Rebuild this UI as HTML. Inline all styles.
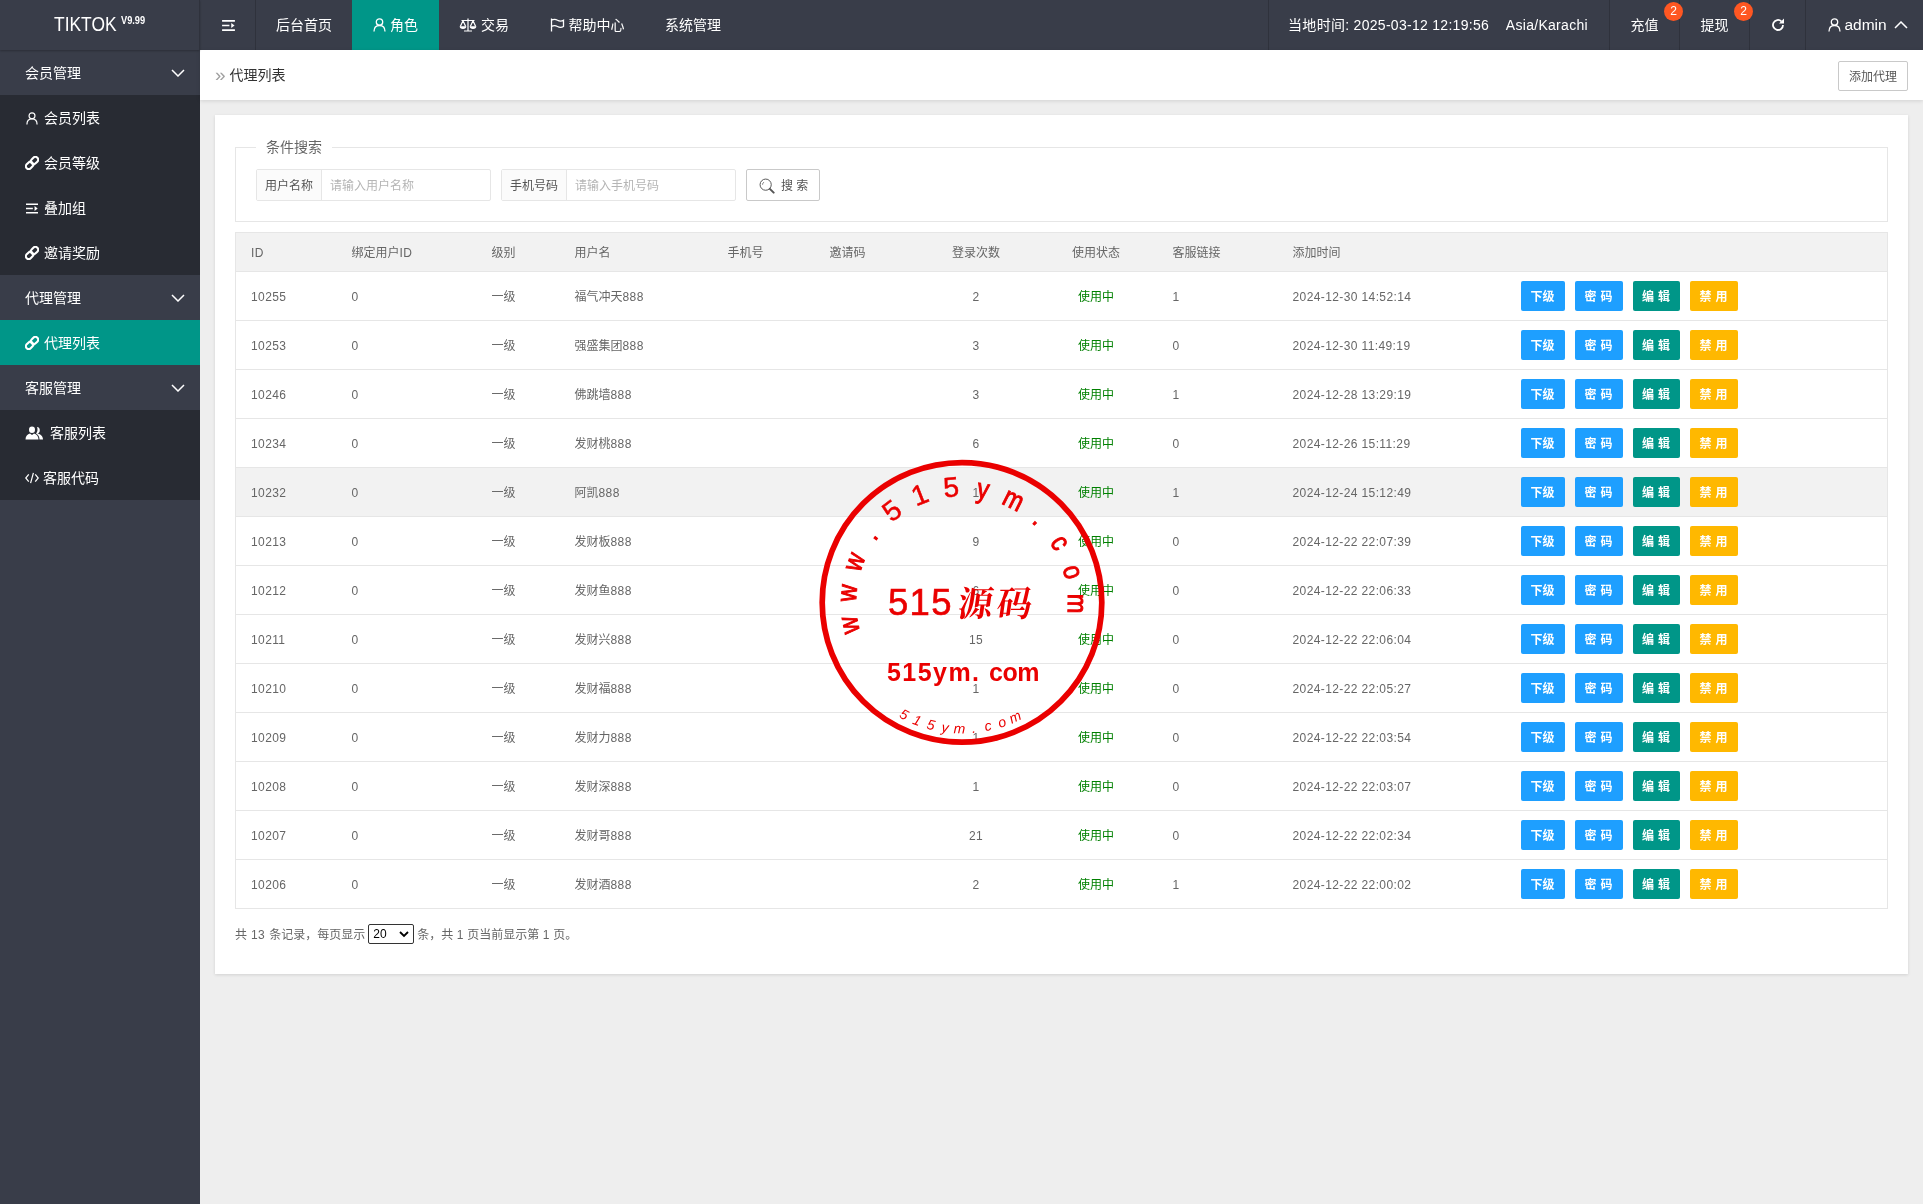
<!DOCTYPE html>
<html lang="zh-CN">
<head>
<meta charset="utf-8">
<title>代理列表</title>
<style>
*{box-sizing:border-box;margin:0;padding:0}
html,body{width:1923px;height:1204px;overflow:hidden}
body{font-family:"Liberation Sans","Noto Sans CJK SC",sans-serif;font-size:14px;color:#333;background:#eeeeee;position:relative;will-change:transform}
a{text-decoration:none;color:inherit}
ul{list-style:none}
/* header */
.header{position:absolute;left:0;top:0;width:1923px;height:50px;background:#393d49;color:#fff}
.logo{position:absolute;left:0;top:0;width:200px;height:50px;line-height:50px;font-size:20px;color:#fff;border-right:1px solid #2f323c;box-shadow:0 1px 2px rgba(0,0,0,.25);z-index:5}
.logo b{position:absolute;left:54px;top:-1px;font-weight:normal;transform:scaleX(.87);transform-origin:0 50%}
.logo i{position:absolute;left:121px;top:-5px;font-style:normal;font-weight:bold;font-size:10.5px;transform:scaleX(.88);transform-origin:0 50%}
.nav{position:absolute;top:0;height:50px}
.nav li{float:left;height:50px;line-height:50px;font-size:14px;color:#fff;text-align:center;position:relative}
.nav li.bl{border-left:1px solid #2f323c}
.nav li.br{border-right:1px solid #2f323c}
.nav li.on{background:#009688}
.nav svg{vertical-align:middle;position:relative;top:-1px}
.badge{position:absolute;z-index:3;right:-4px;top:2px;width:19px;height:19px;border-radius:10px;background:#ff5722;color:#fff;font-size:12px;line-height:19px;text-align:center}
/* side */
.side{position:absolute;left:0;top:50px;width:200px;height:1154px;background:#393d49}
.side li{height:45px;line-height:47px;color:#fff;font-size:14px;position:relative}
.side li.g{padding-left:25px;background:#393d49}
.side li.s{padding-left:25px;background:#282b33}
.side li.on{background:#009688}
.side li.g svg.arr{position:absolute;right:15px;top:19px}
.side li svg.ic{vertical-align:middle;position:relative;top:-1px;margin-right:5px}
/* body */
.crumb{position:absolute;left:200px;top:50px;width:1723px;height:50px;background:#fff;box-shadow:0 1px 4px rgba(0,0,0,.12);line-height:50px;font-size:14px;color:#333}
.crumb .t{position:absolute;left:15px;top:0}
.crumb .t i{font-style:normal;color:#a0a0a0;margin-right:4px;font-size:19px;position:relative;top:1px;line-height:20px}
.addbtn{position:absolute;left:1638px;top:11px;width:70px;height:30px;border:1px solid #c9c9c9;border-radius:2px;line-height:30px;text-align:center;font-size:12px;color:#555;background:#fff}
.card{position:absolute;left:215px;top:115px;width:1693px;height:859px;background:#fff;box-shadow:0 1px 3px rgba(0,0,0,.12)}
.fs{position:absolute;left:20px;top:32px;width:1653px;height:75px;border:1px solid #e6e6e6}
.fs .lg{position:absolute;left:20px;top:-12px;background:#fff;padding:0 10px;font-size:14px;color:#666;line-height:22px}
.grp{position:absolute;top:21px;height:32px;border:1px solid #e6e6e6;border-radius:2px;font-size:12px}
.grp .l{position:absolute;left:0;top:0;width:65px;height:30px;line-height:32px;text-align:center;background:#fbfbfb;border-right:1px solid #e6e6e6;color:#555}
.grp .p{position:absolute;left:73px;top:0;line-height:32px;color:#b5b5b5}
.sbtn{position:absolute;left:510px;top:21px;width:74px;height:32px;border:1px solid #c9c9c9;border-radius:2px;line-height:32px;font-size:12px;color:#555;background:#fff}
.sbtn svg{position:absolute;left:12px;top:8px}
.sbtn span{position:absolute;left:34px;top:0}
table{position:absolute;left:20px;top:117px;width:1653px;border-collapse:collapse;table-layout:fixed;font-size:12px;color:#666}
table th,table td{border-top:1px solid #e6e6e6;border-bottom:1px solid #e6e6e6;text-align:left;padding:2px 15px 0;font-weight:normal;white-space:nowrap;line-height:20px}
table{border:1px solid #e6e6e6}
thead tr{height:39px;background:#f2f2f2}
tbody tr{height:49px}
tr.hov{background:#f2f2f2}
.n{letter-spacing:.39px}
th.c,td.c{text-align:center}
.ok{color:#008000}
.btn{display:inline-block;position:relative;top:-1px;height:30px;line-height:32px;word-spacing:.7px;padding:0;text-align:center;width:48px;border-radius:2px;color:#fff;font-size:12px;font-weight:bold;vertical-align:middle;margin-right:10px}
.w44{width:44px}.w47{width:47px}.b1{background:#1e9fff}.b2{background:#009688}.b3{background:#ffb800}
.pg{position:absolute;left:20px;top:810px;font-size:12px;color:#666;line-height:20px;white-space:nowrap}
.sel{display:inline-block;vertical-align:middle;width:46px;height:20px;border:1px solid #333;border-radius:2px;margin:0 3px;position:relative;top:-2px;color:#000;font-size:12px;line-height:18px;padding-left:4px;background:#fff}
.sel svg{position:absolute;right:4px;top:6px}
.stamp{position:absolute;left:762px;top:402px;width:400px;height:400px}
</style>
</head>
<body>
<div class="header">
  <div class="logo"><b>TIKTOK</b><i>V9.99</i></div>
  <ul class="nav" style="left:200px">
    <li class="br" style="width:56px"><svg style="left:1px" width="13" height="11" viewBox="0 0 14 12"><path d="M0 1h14M0 6h8M0 11h14" stroke="#fff" stroke-width="1.8" fill="none"/><path d="M10 3.2l3.6 2.8L10 8.8z" fill="#fff"/></svg></li>
    <li style="width:96px">后台首页</li>
    <li class="on" style="width:87px"><svg width="13" height="14" viewBox="0 0 13 14"><circle cx="6.5" cy="4" r="3.2" stroke="#fff" stroke-width="1.3" fill="none"/><path d="M1 13.5c0-4 2.4-6 5.5-6s5.5 2 5.5 6" stroke="#fff" stroke-width="1.3" fill="none"/></svg> 角色</li>
    <li style="width:90px"><svg width="18" height="14" viewBox="0 0 18 14"><path d="M9 0.5v12M5 13h8M2.500 2.500h13M4 2.800L1.300 8.500M4 2.800L6.700 8.500M14 2.800L11.300 8.500M14 2.800L16.700 8.500" stroke="#fff" stroke-width="1.200" fill="none"/><path d="M0.700 8.300h6.600a3.300 2.600 0 0 1-6.600 0zM10.700 8.300h6.600a3.300 2.600 0 0 1-6.600 0z" fill="#fff"/></svg> 交易</li>
    <li style="width:116px"><svg width="15" height="14" viewBox="0 0 15 14"><path d="M1.500 0.500v13M1.500 2.200c2-1.200 4-1.200 6 0s4 1.200 6 0v6.300c-2 1.200-4 1.200-6 0s-4-1.200-6 0" stroke="#fff" stroke-width="1.300" fill="none"/></svg> 帮助中心</li>
    <li style="width:96px">系统管理</li>
  </ul>
  <ul class="nav" style="left:1268px">
    <li class="bl" style="width:341px;letter-spacing:.29px;padding-right:2px">当地时间: 2025-03-12 12:19:56 &nbsp;&nbsp;&nbsp;Asia/Karachi</li>
    <li class="bl" style="width:70px">充值<span class="badge">2</span></li>
    <li class="bl" style="width:70px">提现<span class="badge">2</span></li>
    <li class="bl" style="width:56px"><svg width="14" height="14" viewBox="0 0 14 14"><path d="M12 7a5 5 0 1 1-1.6-3.7" stroke="#fff" stroke-width="1.8" fill="none"/><path d="M13 0.5v5h-5z" fill="#fff"/></svg></li>
    <li class="bl" style="width:118px;padding-left:6px"><svg width="13" height="14" viewBox="0 0 13 14"><circle cx="6.5" cy="4" r="3.2" stroke="#fff" stroke-width="1.3" fill="none"/><path d="M1 13.5c0-4 2.4-6 5.5-6s5.5 2 5.5 6" stroke="#fff" stroke-width="1.3" fill="none"/></svg> <span style="font-size:15.5px">admin</span> <svg style="margin-left:3px" width="14" height="8" viewBox="0 0 14 8"><path d="M1 7l6-6 6 6" stroke="#fff" stroke-width="1.5" fill="none"/></svg></li>
  </ul>
</div>

<div class="side">
  <ul>
    <li class="g">会员管理<svg class="arr" width="14" height="8" viewBox="0 0 14 8"><path d="M1 1l6 6 6-6" stroke="#fff" stroke-width="1.5" fill="none"/></svg></li>
    <li class="s"><svg class="ic" style="margin-left:1px;margin-right:6px" width="12" height="13" viewBox="0 0 13 14"><circle cx="6.5" cy="4" r="3.2" stroke="#fff" stroke-width="1.3" fill="none"/><path d="M1 13.5c0-4 2.4-6 5.5-6s5.5 2 5.5 6" stroke="#fff" stroke-width="1.3" fill="none"/></svg>会员列表</li>
    <li class="s"><svg class="ic" width="14" height="14" viewBox="0 0 14 14"><g transform="rotate(-45 7 7)" stroke="#fff" stroke-width="2.100" fill="none"><rect x="-0.5" y="4.2" width="8" height="5.6" rx="2.8"/><rect x="6.5" y="4.2" width="8" height="5.6" rx="2.8"/></g></svg>会员等级</li>
    <li class="s"><svg class="ic" style="margin-left:1px;margin-right:6px" width="12" height="11" viewBox="0 0 14 12"><path d="M0 1h14M0 6h8M0 11h14" stroke="#fff" stroke-width="1.8" fill="none"/><path d="M10 3.2l3.6 2.8L10 8.8z" fill="#fff"/></svg>叠加组</li>
    <li class="s"><svg class="ic" width="14" height="14" viewBox="0 0 14 14"><g transform="rotate(-45 7 7)" stroke="#fff" stroke-width="2.100" fill="none"><rect x="-0.5" y="4.2" width="8" height="5.6" rx="2.8"/><rect x="6.5" y="4.2" width="8" height="5.6" rx="2.8"/></g></svg>邀请奖励</li>
    <li class="g">代理管理<svg class="arr" width="14" height="8" viewBox="0 0 14 8"><path d="M1 1l6 6 6-6" stroke="#fff" stroke-width="1.5" fill="none"/></svg></li>
    <li class="s on"><svg class="ic" width="14" height="14" viewBox="0 0 14 14"><g transform="rotate(-45 7 7)" stroke="#fff" stroke-width="2.100" fill="none"><rect x="-0.5" y="4.2" width="8" height="5.6" rx="2.8"/><rect x="6.5" y="4.2" width="8" height="5.6" rx="2.8"/></g></svg>代理列表</li>
    <li class="g">客服管理<svg class="arr" width="14" height="8" viewBox="0 0 14 8"><path d="M1 1l6 6 6-6" stroke="#fff" stroke-width="1.5" fill="none"/></svg></li>
    <li class="s"><svg class="ic" width="19" height="14" viewBox="0 0 19 14" style="margin-right:6px"><path d="M7 0.5a3 3.3 0 0 1 0 6.6a3 3.3 0 0 1 0-6.6zM0.5 13.5c0-3.5 2-5.5 4.5-6l2 1.5 2-1.5c2.5 0.5 4.500 2.500 4.500 6z" fill="#fff"/><path d="M12 1a3 3.300 0 0 1 0.500 6.500c3 0.500 5.500 2.500 5.500 6h-3.500c0-3-1.500-5-3.500-6c1.500-1 2-4.500 1-6.500z" fill="#fff"/></svg>客服列表</li>
    <li class="s"><svg class="ic" style="margin-right:4px" width="14" height="12" viewBox="0 0 15 12"><path d="M4 2L0.800 6L4 10M11 2l3.200 4L11 10M9 0.500L6 11.500" stroke="#fff" stroke-width="1.300" fill="none"/></svg>客服代码</li>
  </ul>
</div>

<div class="crumb"><span class="t"><i>»</i>代理列表</span><a class="addbtn">添加代理</a></div>

<div class="card">
  <div class="fs"><span class="lg">条件搜索</span>
    <div class="grp" style="left:20px;width:235px"><span class="l">用户名称</span><span class="p">请输入用户名称</span></div>
    <div class="grp" style="left:265px;width:235px"><span class="l">手机号码</span><span class="p">请输入手机号码</span></div>
    <a class="sbtn"><svg width="16" height="16" viewBox="0 0 18 18"><circle cx="7.500" cy="7.500" r="6.300" stroke="#555" stroke-width="1.100" fill="none"/><path d="M12.200 12.200l4.300 4.300" stroke="#555" stroke-width="2.200" stroke-linecap="round"/><path d="M4 7.500a3.500 3.500 0 0 1 1.500-2.800" stroke="#555" stroke-width="0.900" fill="none"/></svg><span>搜 索</span></a>
  </div>
  <table>
    <colgroup><col style="width:101px"><col style="width:140px"><col style="width:83px"><col style="width:153px"><col style="width:102px"><col style="width:103px"><col style="width:117px"><col style="width:123px"><col style="width:120px"><col style="width:228px"><col></colgroup>
    <thead><tr><th><span class="n">ID</span></th><th>绑定用户<span class="n">ID</span></th><th>级别</th><th>用户名</th><th>手机号</th><th>邀请码</th><th class="c">登录次数</th><th class="c">使用状态</th><th>客服链接</th><th>添加时间</th><th></th></tr></thead>
    <tbody>
<tr><td><span class="n">10255</span></td><td><span class="n">0</span></td><td>一级</td><td>福气冲天<span class="n">888</span></td><td></td><td></td><td class="c"><span class="n">2</span></td><td class="c"><span class="ok">使用中</span></td><td><span class="n">1</span></td><td><span class="n">2024-12-30 14:52:14</span></td><td><a class="btn b1 w44">下级</a><a class="btn b1">密 码</a><a class="btn b2 w47">编 辑</a><a class="btn b3">禁 用</a></td></tr>
<tr><td><span class="n">10253</span></td><td><span class="n">0</span></td><td>一级</td><td>强盛集团<span class="n">888</span></td><td></td><td></td><td class="c"><span class="n">3</span></td><td class="c"><span class="ok">使用中</span></td><td><span class="n">0</span></td><td><span class="n">2024-12-30 11:49:19</span></td><td><a class="btn b1 w44">下级</a><a class="btn b1">密 码</a><a class="btn b2 w47">编 辑</a><a class="btn b3">禁 用</a></td></tr>
<tr><td><span class="n">10246</span></td><td><span class="n">0</span></td><td>一级</td><td>佛跳墙<span class="n">888</span></td><td></td><td></td><td class="c"><span class="n">3</span></td><td class="c"><span class="ok">使用中</span></td><td><span class="n">1</span></td><td><span class="n">2024-12-28 13:29:19</span></td><td><a class="btn b1 w44">下级</a><a class="btn b1">密 码</a><a class="btn b2 w47">编 辑</a><a class="btn b3">禁 用</a></td></tr>
<tr><td><span class="n">10234</span></td><td><span class="n">0</span></td><td>一级</td><td>发财桃<span class="n">888</span></td><td></td><td></td><td class="c"><span class="n">6</span></td><td class="c"><span class="ok">使用中</span></td><td><span class="n">0</span></td><td><span class="n">2024-12-26 15:11:29</span></td><td><a class="btn b1 w44">下级</a><a class="btn b1">密 码</a><a class="btn b2 w47">编 辑</a><a class="btn b3">禁 用</a></td></tr>
<tr class="hov"><td><span class="n">10232</span></td><td><span class="n">0</span></td><td>一级</td><td>阿凯<span class="n">888</span></td><td></td><td></td><td class="c"><span class="n">1</span></td><td class="c"><span class="ok">使用中</span></td><td><span class="n">1</span></td><td><span class="n">2024-12-24 15:12:49</span></td><td><a class="btn b1 w44">下级</a><a class="btn b1">密 码</a><a class="btn b2 w47">编 辑</a><a class="btn b3">禁 用</a></td></tr>
<tr><td><span class="n">10213</span></td><td><span class="n">0</span></td><td>一级</td><td>发财板<span class="n">888</span></td><td></td><td></td><td class="c"><span class="n">9</span></td><td class="c"><span class="ok">使用中</span></td><td><span class="n">0</span></td><td><span class="n">2024-12-22 22:07:39</span></td><td><a class="btn b1 w44">下级</a><a class="btn b1">密 码</a><a class="btn b2 w47">编 辑</a><a class="btn b3">禁 用</a></td></tr>
<tr><td><span class="n">10212</span></td><td><span class="n">0</span></td><td>一级</td><td>发财鱼<span class="n">888</span></td><td></td><td></td><td class="c"><span class="n">6</span></td><td class="c"><span class="ok">使用中</span></td><td><span class="n">0</span></td><td><span class="n">2024-12-22 22:06:33</span></td><td><a class="btn b1 w44">下级</a><a class="btn b1">密 码</a><a class="btn b2 w47">编 辑</a><a class="btn b3">禁 用</a></td></tr>
<tr><td><span class="n">10211</span></td><td><span class="n">0</span></td><td>一级</td><td>发财兴<span class="n">888</span></td><td></td><td></td><td class="c"><span class="n">15</span></td><td class="c"><span class="ok">使用中</span></td><td><span class="n">0</span></td><td><span class="n">2024-12-22 22:06:04</span></td><td><a class="btn b1 w44">下级</a><a class="btn b1">密 码</a><a class="btn b2 w47">编 辑</a><a class="btn b3">禁 用</a></td></tr>
<tr><td><span class="n">10210</span></td><td><span class="n">0</span></td><td>一级</td><td>发财福<span class="n">888</span></td><td></td><td></td><td class="c"><span class="n">1</span></td><td class="c"><span class="ok">使用中</span></td><td><span class="n">0</span></td><td><span class="n">2024-12-22 22:05:27</span></td><td><a class="btn b1 w44">下级</a><a class="btn b1">密 码</a><a class="btn b2 w47">编 辑</a><a class="btn b3">禁 用</a></td></tr>
<tr><td><span class="n">10209</span></td><td><span class="n">0</span></td><td>一级</td><td>发财力<span class="n">888</span></td><td></td><td></td><td class="c"><span class="n">1</span></td><td class="c"><span class="ok">使用中</span></td><td><span class="n">0</span></td><td><span class="n">2024-12-22 22:03:54</span></td><td><a class="btn b1 w44">下级</a><a class="btn b1">密 码</a><a class="btn b2 w47">编 辑</a><a class="btn b3">禁 用</a></td></tr>
<tr><td><span class="n">10208</span></td><td><span class="n">0</span></td><td>一级</td><td>发财深<span class="n">888</span></td><td></td><td></td><td class="c"><span class="n">1</span></td><td class="c"><span class="ok">使用中</span></td><td><span class="n">0</span></td><td><span class="n">2024-12-22 22:03:07</span></td><td><a class="btn b1 w44">下级</a><a class="btn b1">密 码</a><a class="btn b2 w47">编 辑</a><a class="btn b3">禁 用</a></td></tr>
<tr><td><span class="n">10207</span></td><td><span class="n">0</span></td><td>一级</td><td>发财哥<span class="n">888</span></td><td></td><td></td><td class="c"><span class="n">21</span></td><td class="c"><span class="ok">使用中</span></td><td><span class="n">0</span></td><td><span class="n">2024-12-22 22:02:34</span></td><td><a class="btn b1 w44">下级</a><a class="btn b1">密 码</a><a class="btn b2 w47">编 辑</a><a class="btn b3">禁 用</a></td></tr>
<tr><td><span class="n">10206</span></td><td><span class="n">0</span></td><td>一级</td><td>发财酒<span class="n">888</span></td><td></td><td></td><td class="c"><span class="n">2</span></td><td class="c"><span class="ok">使用中</span></td><td><span class="n">1</span></td><td><span class="n">2024-12-22 22:00:02</span></td><td><a class="btn b1 w44">下级</a><a class="btn b1">密 码</a><a class="btn b2 w47">编 辑</a><a class="btn b3">禁 用</a></td></tr>
    </tbody>
  </table>
  <div class="pg"><span style="word-spacing:.7px">共 <span class="n">13</span> 条记录，每页显示</span><span class="sel">20<svg width="10" height="7" viewBox="0 0 10 7"><path d="M1 1l4 4 4-4" stroke="#000" stroke-width="1.800" fill="none"/></svg></span><span style="word-spacing:.1px">条，共 <span class="n">1</span> 页当前显示第 <span class="n">1</span> 页。</span></div>
</div>

<svg class="stamp" viewBox="762 402 400 400">
<circle cx="962.0" cy="602.4" r="139.8" fill="none" stroke="#ea0000" stroke-width="5.7"/>
<text transform="rotate(258.6 962.0 602.4) translate(962.0 496.4) scale(0.84 1)" x="0" y="0" text-anchor="middle" font-family="'Liberation Sans',sans-serif" font-size="28" fill="#ea0000" stroke="#ea0000" stroke-width="1.0">w</text>
<text transform="rotate(274.6 962.0 602.4) translate(962.0 496.4) scale(0.84 1)" x="0" y="0" text-anchor="middle" font-family="'Liberation Sans',sans-serif" font-size="28" fill="#ea0000" stroke="#ea0000" stroke-width="1.0">w</text>
<text transform="rotate(290.6 962.0 602.4) translate(962.0 496.4) scale(0.84 1)" x="0" y="0" text-anchor="middle" font-family="'Liberation Sans',sans-serif" font-size="28" fill="#ea0000" stroke="#ea0000" stroke-width="1.0">w</text>
<text transform="rotate(306.6 962.0 602.4) translate(962.0 496.4) scale(0.84 1)" x="0" y="0" text-anchor="middle" font-family="'Liberation Sans',sans-serif" font-size="28" fill="#ea0000" stroke="#ea0000" stroke-width="1.0">.</text>
<text transform="rotate(322.6 962.0 602.4) translate(962.0 496.4) scale(1 1)" x="0" y="0" text-anchor="middle" font-family="'Liberation Sans',sans-serif" font-size="28" fill="#ea0000" stroke="#ea0000" stroke-width="0.5">5</text>
<text transform="rotate(338.6 962.0 602.4) translate(962.0 496.4) scale(1 1)" x="0" y="0" text-anchor="middle" font-family="'Liberation Sans',sans-serif" font-size="28" fill="#ea0000" stroke="#ea0000" stroke-width="0.5">1</text>
<text transform="rotate(354.6 962.0 602.4) translate(962.0 496.4) scale(1 1)" x="0" y="0" text-anchor="middle" font-family="'Liberation Sans',sans-serif" font-size="28" fill="#ea0000" stroke="#ea0000" stroke-width="0.5">5</text>
<text transform="rotate(370.6 962.0 602.4) translate(962.0 496.4) scale(0.84 1)" x="0" y="0" text-anchor="middle" font-family="'Liberation Sans',sans-serif" font-size="28" fill="#ea0000" stroke="#ea0000" stroke-width="1.0">y</text>
<text transform="rotate(386.6 962.0 602.4) translate(962.0 496.4) scale(0.84 1)" x="0" y="0" text-anchor="middle" font-family="'Liberation Sans',sans-serif" font-size="28" fill="#ea0000" stroke="#ea0000" stroke-width="1.0">m</text>
<text transform="rotate(402.6 962.0 602.4) translate(962.0 496.4) scale(0.84 1)" x="0" y="0" text-anchor="middle" font-family="'Liberation Sans',sans-serif" font-size="28" fill="#ea0000" stroke="#ea0000" stroke-width="1.0">.</text>
<text transform="rotate(418.6 962.0 602.4) translate(962.0 496.4) scale(0.84 1)" x="0" y="0" text-anchor="middle" font-family="'Liberation Sans',sans-serif" font-size="28" fill="#ea0000" stroke="#ea0000" stroke-width="1.0">c</text>
<text transform="rotate(434.6 962.0 602.4) translate(962.0 496.4) scale(0.84 1)" x="0" y="0" text-anchor="middle" font-family="'Liberation Sans',sans-serif" font-size="28" fill="#ea0000" stroke="#ea0000" stroke-width="1.0">o</text>
<text transform="rotate(450.6 962.0 602.4) translate(962.0 496.4) scale(0.84 1)" x="0" y="0" text-anchor="middle" font-family="'Liberation Sans',sans-serif" font-size="28" fill="#ea0000" stroke="#ea0000" stroke-width="1.0">m</text>
<text transform="rotate(27.3 962.0 602.4)" x="962.0" y="733.4" text-anchor="middle" font-family="'Liberation Sans',sans-serif" font-size="14" font-style="italic" fill="#ea0000">5</text>
<text transform="rotate(20.8 962.0 602.4)" x="962.0" y="733.4" text-anchor="middle" font-family="'Liberation Sans',sans-serif" font-size="14" font-style="italic" fill="#ea0000">1</text>
<text transform="rotate(14.2 962.0 602.4)" x="962.0" y="733.4" text-anchor="middle" font-family="'Liberation Sans',sans-serif" font-size="14" font-style="italic" fill="#ea0000">5</text>
<text transform="rotate(7.7 962.0 602.4)" x="962.0" y="733.4" text-anchor="middle" font-family="'Liberation Sans',sans-serif" font-size="14" font-style="italic" fill="#ea0000">y</text>
<text transform="rotate(1.2 962.0 602.4)" x="962.0" y="733.4" text-anchor="middle" font-family="'Liberation Sans',sans-serif" font-size="14" font-style="italic" fill="#ea0000">m</text>
<text transform="rotate(-5.3 962.0 602.4)" x="962.0" y="733.4" text-anchor="middle" font-family="'Liberation Sans',sans-serif" font-size="14" font-style="italic" fill="#ea0000">.</text>
<text transform="rotate(-11.9 962.0 602.4)" x="962.0" y="733.4" text-anchor="middle" font-family="'Liberation Sans',sans-serif" font-size="14" font-style="italic" fill="#ea0000">c</text>
<text transform="rotate(-18.4 962.0 602.4)" x="962.0" y="733.4" text-anchor="middle" font-family="'Liberation Sans',sans-serif" font-size="14" font-style="italic" fill="#ea0000">o</text>
<text transform="rotate(-24.9 962.0 602.4)" x="962.0" y="733.4" text-anchor="middle" font-family="'Liberation Sans',sans-serif" font-size="14" font-style="italic" fill="#ea0000">m</text>
<text x="888" y="614.8" font-family="'Liberation Sans',sans-serif" font-size="36.5" fill="#ea0000" stroke="#ea0000" stroke-width="0.6" textLength="63.500" lengthAdjust="spacing">515</text>
<text transform="translate(956.5 616) skewX(-8)" font-family="'Noto Serif CJK SC','Noto Sans CJK SC',serif" font-weight="700" font-size="35" fill="#ea0000" textLength="74" lengthAdjust="spacing">源码</text>
<text x="887" y="681.4" font-family="'Liberation Sans',sans-serif" font-weight="bold" font-size="25" fill="#ea0000" textLength="92" lengthAdjust="spacing">515ym.</text>
<text x="989" y="681.4" font-family="'Liberation Sans',sans-serif" font-weight="bold" font-size="25" fill="#ea0000" textLength="50.500" lengthAdjust="spacing">com</text>
</svg>
</body>
</html>
